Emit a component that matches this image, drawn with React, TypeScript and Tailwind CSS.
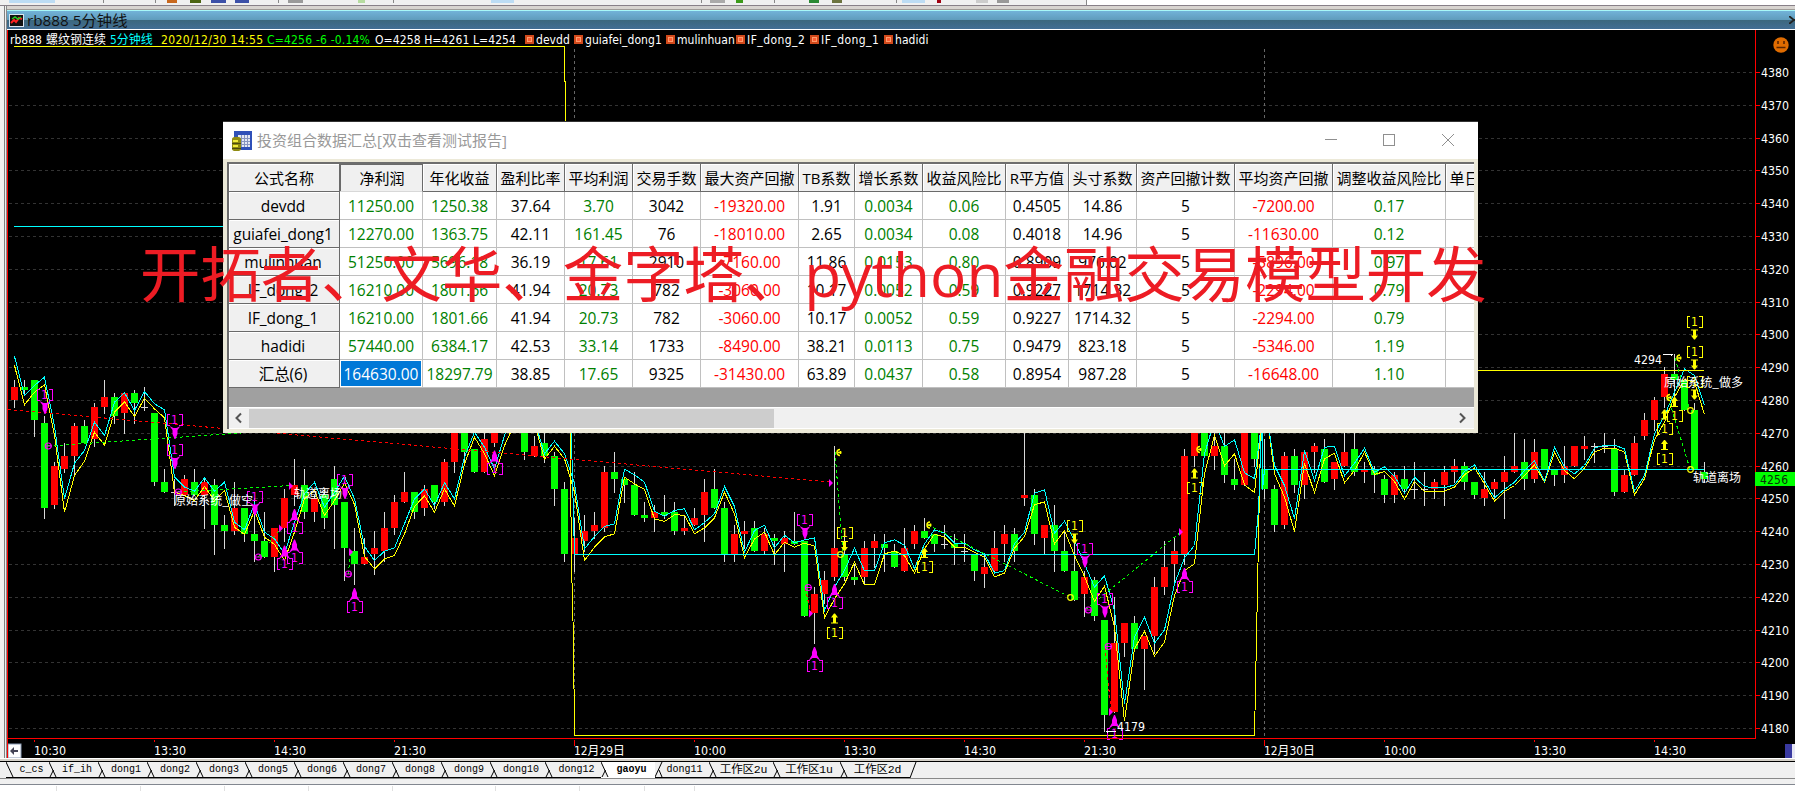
import React from "react";

type Bar = [kind: "r" | "g", top: number, bottom: number, high: number, low: number];

const barRows = `r84,80,86,78 g84,83,86,82 g86,74,86,69 g73,47,75,44 r60,48,61,47 r63,59,67,58 r72,63,73,57 g72,67,74,67 r78,68,79,66 r81,78,86,76
g81,75,82,73 r82,76,82,70 g82,79,83,73 r78,78,84,77 g76,55,76,54 g55,52,59,52 r52,52,56,48 r56,51,57,51 g55,51,59,51 r55,51,56,41
g54,42,56,33 g42,40,45,35 r47,40,55,39 g47,39,47,37 g39,37,50,31 g37,32,46,32 r41,32,41,28 r50,41,53,37 r54,51,62,48 g54,46,59,44
r50,46,51,43 g51,44,53,41 g56,48,60,35 g49,35,49,25 g34,30,41,24 r32,30,38,30 r35,33,40,27 r41,34,46,31 r49,41,51,39 r52,49,58,49
g52,46,52,44 r53,47,54,45 g54,49,54,47 r61,49,62,48 r75,61,78,58 g75,64,78,61 g65,58,65,58 r68,58,72,58 r75,67,78,66 r82,75,84,74
g84,78,85,76 g78,64,79,62 r66,63,69,63 g67,63,72,61 g63,53,64,48 g53,33,55,31 r38,33,44,28 r40,37,45,34 r42,40,46,38 r58,41,60,40
g58,56,64,52 g56,54,56,49 g54,45,58,45 g45,44,49,43 r46,44,48,40 g46,45,51,44 g46,40,49,39 r41,40,45,39 r44,42,47,42 r52,45,56,37
g53,47,59,47 g47,33,49,31 r39,33,42,31 r40,39,43,35 g41,34,43,34 r39,34,41,33 g38,37,39,30 r38,36,40,28 g37,36,46,36 g37,14,37,14
r21,15,23,6 r25,21,28,18 r35,26,66,25 g33,26,40,25 g26,25,30,24 r35,26,37,24 r37,35,39,29 g36,35,39,28 g34,29,36,29 r35,28,41,28
r40,36,42,35 g40,38,44,38 g39,36,39,34 r36,36,42,35 g36,35,39,30 r34,34,39,31 g33,28,33,25 r29,27,33,23 r35,28,40,28 r39,36,42,31
g39,34,41,31 r51,50,75,48 g51,39,53,36 r42,38,42,33 g42,34,48,28 g34,28,40,28 g28,19,37,19 r26,21,28,14 g25,14,26,13 g13,-16,13,-21
r6,-15,20,-15 r12,6,12,2 g12,4,14,4 r8,4,8,-8 r23,8,26,3 r29,23,37,21 r34,30,38,24 r63,33,65,30 r75,63,78,60 g75,63,78,63
r66,63,70,59 g66,57,75,55 g56,54,62,53 r75,54,75,54 g75,62,75,60 g59,53,68,50 g53,42,54,40 r63,42,64,41 g63,54,65,52 r64,54,64,50
r66,64,67,58 g65,55,68,55 r61,56,61,53 r64,60,75,60 g65,58,75,57 r59,58,61,55 g59,57,60,52 g56,51,57,49 r57,51,58,49 g56,53,60,52
r53,53,61,50 r53,53,58,48 r55,53,56,50 r58,54,60,48 r60,58,62,55 g60,55,61,53 g55,51,55,50 r53,50,58,48 r55,53,56,50 r58,55,63,44
r60,58,70,58 g61,56,68,53 r64,56,68,55 g65,59,65,59 g59,57,59,54 r60,57,66,55 r66,60,66,60 r66,65,69,62 r66,66,67,61 r66,66,70,64
g65,52,68,51 r57,52,59,52 r67,57,69,57 r74,69,76,68 r80,74,81,71 r88,81,90,78 g88,86,94,81 g86,77,86,77 g77,59,79,59 g58,56,61,55`;

const bars: Bar[] = barRows.split(/\s+/).map((t) => {
  const n = t.slice(1).split(",").map(Number);
  return [t[0] as "r" | "g", n[0], n[1], n[2], n[3]];
});

// Moving lines, one value per bar, in thirds of a pixel below y = 420.
const fast = [
  -192, -75, -105, -130, 18, 235, 128, 90, 5, 45, -55, -83, -30, -87, -50, -32, 170, 200, 212, 172, 212, 185, 305, 328, 250, 335, 355, 400, 305, 220,
  185, 260, 215, 167, 235, 378, 420, 392, 382, 310, 235, 205, 255, 187, 235, 110, 35, 80, 145, 45, -40, -60, 0, 100, 62, 100, 190, 385, 348, 318,
  310, 146, 163, 185, 272, 287, 270, 265, 328, 306, 280, 198, 258, 395, 330, 314, 382, 344, 367, 358, 352, 570, 500, 450, 383, 451, 451, 367, 358, 374,
  445, 370, 328, 338, 368, 368, 388, 400, 458, 450, 370, 335, 218, 208, 338, 302, 360, 430, 500, 466, 570, 850, 650, 590, 668, 628, 490, 412, 375, 100,
  0, 78, 58, 157, 174, -60, 135, 195, 295, 90, 180, 80, 78, 166, 128, 83, 155, 139, 167, 218, 170, 198, 202, 202, 193, 153, 133, 180, 232, 207,
  185, 150, 121, 182, 80, 140, 160, 135, 83, 74, 74, 85, 212, 165, 40, -15, -85, -155, -135, -45,
];
const slow = [
  -165, -47, -85, -107, 45, 275, 165, 122, 35, 74, -25, -56, -12, -67, -35, -8, 215, 225, 240, 198, 240, 210, 320, 342, 270, 350, 372, 420, 335, 235,
  210, 285, 240, 188, 252, 408, 445, 415, 405, 340, 258, 226, 275, 205, 257, 130, 50, 100, 165, 75, 10, -20, 10, 116, 77, 115, 215, 420, 380, 349,
  340, 170, 190, 207, 295, 303, 283, 284, 340, 322, 292, 215, 280, 412, 355, 335, 403, 365, 380, 368, 377, 592, 535, 490, 425, 493, 493, 400, 392, 405,
  458, 385, 341, 350, 380, 380, 395, 410, 469, 458, 383, 348, 253, 244, 370, 330, 405, 468, 543, 497, 620, 902, 685, 632, 706, 665, 525, 450, 430, 160,
  45, 136, 100, 193, 216, -70, 160, 230, 333, 128, 217, 115, 98, 187, 150, 95, 162, 153, 183, 236, 183, 213, 212, 212, 200, 163, 142, 190, 242, 213,
  195, 165, 133, 185, 96, 150, 175, 143, 95, 83, 83, 95, 223, 175, 58, 5, -70, -123, -115, -18,
];

const line = (v: number[]) => v.map((w, i) => `${14.5 + 10 * i},${420.5 + w / 3}`).join(" ");
const priceY = (p: number) => Math.round(72 + (4380 - p) * 3.28);

const M = "#ff00ff";
const Y = "#ffff00";

type Pt = [number, number];
const sellMarks: Pt[] = [[44, 395], [174, 420], [174, 450], [254, 496.5], [344, 480], [804, 520], [1084, 548.5], [1104, 598.5]];
const coverMarks: Pt[] = [[294, 527.5], [294, 558], [284, 564], [354, 606.5], [494, 469], [814, 665.5], [834, 602.5], [1184, 586.5], [1114, 733.5]];
const exitMarks: Pt[] = [[844, 533], [1074, 525.5], [1694, 321.5], [1694, 351.5], [1694, 381.5]];
const buyMarks: Pt[] = [[834, 632.5], [924, 567], [1194, 487.5], [1664, 428.5], [1674, 416], [1664, 459]];
const magentaRings: Pt[] = [[48, 446], [178, 492], [258, 557], [348, 574], [808, 587.5], [1088, 610], [1108, 646.5]];
const yellowRings: Pt[] = [[840, 554], [1070, 597], [1690, 410], [1690, 469]];
const yellowOpens: Pt[] = [[838, 452], [928, 524.5], [1198, 449], [1678, 357.5], [1668, 397]];
const triangles: Pt[] = [[291, 485.5], [281, 528], [351, 551.5], [831, 482.5], [811, 613], [1181, 531.5], [1111, 711.5]];
const trades: [number, number, number, number, string][] = [
  [8, 409.5, 830, 482, "#ff0000"],
  [48, 446, 330, 427, "#00ff00"],
  [178, 492, 291, 485.5, "#00ff00"],
  [258, 557, 281, 528, "#00ff00"],
  [348, 574, 351, 552, "#00ff00"],
  [805, 588, 811, 613, "#ff0000"],
  [835, 452, 843, 554, "#00ff00"],
  [928, 525, 1068, 596, "#00ff00"],
  [1085, 610, 1181, 532, "#00ff00"],
  [1105, 647, 1111, 712, "#ff0000"],
  [1675, 358, 1690, 410, "#00ff00"],
  [1668, 397, 1690, 469, "#00ff00"],
];
const times: [number, string, number?][] = [
  [34, "10:30"], [154, "13:30"], [274, "14:30"], [394, "21:30"], [574, "12月29日", 1], [694, "10:00"], [844, "13:30"],
  [964, "14:30"], [1084, "21:30"], [1264, "12月30日", 1], [1384, "10:00"], [1534, "13:30"], [1654, "14:30"],
];
const prices = Array.from({ length: 21 }, (_, i) => 4380 - i * 10);
const chartFont = "'DejaVu Sans Condensed','DejaVu Sans','Noto Sans CJK SC',sans-serif";
const signalFont = "'Noto Sans CJK SC',sans-serif";

function One({ x, y, color }: { x: number; y: number; color: string }) {
  return (
    <g fill="none" stroke={color} strokeWidth="1" shapeRendering="crispEdges">
      <path d={`M${x - 4} ${y - 5.5}h-3v11h3M${x + 5} ${y - 5.5}h3v11h-3`} />
      <text x={x + 0.5} y={y + 4} fill={color} stroke="none" fontSize="12" textAnchor="middle">1</text>
    </g>
  );
}

function Label({ x, y, w, font, children }: { x: number; y: number; w: number; font?: string; children: string }) {
  return (
    <text x={x} y={y + 4.5} fill="#fff" fontSize="12" fontFamily={font} textLength={w} lengthAdjust="spacingAndGlyphs">{children}</text>
  );
}

function Chart() {
  return (
    <svg className="block h-[712px] w-[1787px] shrink-0" viewBox="8 46 1787 712" fontFamily={chartFont}>
      <g stroke="#333" strokeDasharray="3 3" shapeRendering="crispEdges">
        {prices.map((p) => <line key={p} x1="9" x2="1754" y1={priceY(p) + 0.5} y2={priceY(p) + 0.5} />)}
        <path d="M574.5 49V736M1264.5 49V736" stroke="#666" fill="none" />
      </g>
      <g shapeRendering="crispEdges">
        {bars.map(([k, t, b, h, l], i) => {
          const x = 11 + 10 * i;
          const yt = priceY(4200 + t);
          const yb = priceY(4200 + b);
          const yh = priceY(4200 + h);
          return (
            <g key={i}>
              <rect x={x + 3} y={yh} width="1" height={priceY(4200 + l) - yh + 1} fill="#d8d8d8" />
              <rect x={x} y={yt} width="7" height={Math.max(1, yb - yt)} fill={t === b ? "#d8d8d8" : k === "r" ? "#ff0000" : "#00ff00"} />
            </g>
          );
        })}
      </g>
      <g fill="none" shapeRendering="crispEdges">
        <polyline points={line(slow)} stroke={Y} />
        <polyline points={line(fast)} stroke="#00ffff" />
        <path d="M14 46.5H564.5V81L565.5 82V240L570.5 433V470L571.5 563L573.5 640L574.5 735.5H1254.5L1260.5 440L1262.5 370.5H1704" stroke={Y} />
        <path d="M14 226.5H566L571.5 440L574.5 554.5H1254.5L1258.5 510L1262.5 400V490L1264.5 469.5H1704" stroke="#00ffff" />
        {trades.map(([a, b, c, d, s], i) => <line key={i} x1={a} y1={b} x2={c} y2={d} stroke={s} strokeDasharray="3 3" />)}
      </g>
      {sellMarks.map(([x, y], i) => (
        <g key={i}>
          <One x={x} y={y} color={M} />
          <path d={`M${x - 4.5} ${y + 6}l3 4v4l2 5h1l2-5v-4l3-4l-4 2h-3z`} fill={M} />
        </g>
      ))}
      {coverMarks.map(([x, y], i) => (
        <g key={i}>
          <One x={x} y={y} color={M} />
          <path d={`M${x} ${y - 18.5}h1l2 5v3l3.5 6l-4-3h-4l-4 3l3.5-6v-3z`} fill={M} />
        </g>
      ))}
      {exitMarks.map(([x, y], i) => (
        <g key={i}>
          <One x={x} y={y} color={Y} />
          <path d={`M${x - 3} ${y + 8}h7v1h-2v5h2l-3 4h-1l-3-4h2v-5h-2z`} fill={Y} />
        </g>
      ))}
      {buyMarks.map(([x, y], i) => (
        <g key={i}>
          <One x={x} y={y} color={Y} />
          <path d={`M${x - 3} ${y - 9}h7v-1h-2v-5h2l-3-4h-1l-3 4h2v5h-2z`} fill={Y} />
        </g>
      ))}
      <g fill="none" strokeWidth="1.2">
        {magentaRings.map(([x, y], i) => <path key={i} d={`M${x - 2.7} ${y}a3 3 0 1 1 6 0a3 3 0 1 1 -6 0M${x - 3} ${y}h7`} stroke={M} />)}
        {yellowRings.map(([x, y], i) => <circle key={i} cx={x + 0.5} cy={y + 0.5} r="2.8" stroke={Y} />)}
        {yellowOpens.map(([x, y], i) => <path key={i} d={`M${x + 2} ${y - 2.5}a3 3 0 1 0 0 6M${x} ${y + 0.5}h3.5M${x + 2.5} ${y - 1}v3`} stroke={Y} strokeWidth="1.5" />)}
      </g>
      {triangles.map(([x, y], i) => <path key={i} d={`M${x - 2} ${y - 3.5}v8l4-4z`} fill={M} />)}
      <Label x={174} y={500.5} w={79} font={signalFont}>原始系统_做空</Label>
      <Label x={294} y={493} w={48} font={signalFont}>轨道离场</Label>
      <Label x={1664} y={382} w={79} font={signalFont}>原始系统_做多</Label>
      <Label x={1693} y={477} w={48} font={signalFont}>轨道离场</Label>
      <Label x={1634} y={359.5} w={28}>4294</Label>
      <Label x={1117} y={726.5} w={28}>4179</Label>
      <path d="M1663 354.5h10m-2-1v2M1106 731.5h10m-9-1v2" stroke="#fff" shapeRendering="crispEdges" />
      <g stroke="#ff0000" fill="none" shapeRendering="crispEdges">
        <path d="M8 738.5H1755.5V46" />
        {prices.map((p) => <path key={p} d={`M1756 ${priceY(p) + 0.5}h4`} />)}
        {times.map(([x, , long]) => <path key={x} d={`M${x + 0.5} 740v${long ? 6 : 2}`} />)}
      </g>
      {prices.map((p) => <Label key={p} x={1761} y={priceY(p) + 0.5} w={28}>{String(p)}</Label>)}
      <rect x="1755" y="472" width="40" height="14" fill="#00ff00" />
      <text x="1760" y="483.5" fontSize="12" fill="#083008" textLength="28">4256</text>
      {times.map(([x, t, long]) => <Label key={x} x={x} y={750.5} w={long ? 51 : 32}>{t}</Label>)}
      <rect x="8" y="744" width="13" height="14" fill="#fff" stroke="#8a9bb5" />
      <path d="M10 751l4-4v3h4v2h-4v3z" fill="#445" />
      <rect x="1785" y="744" width="7" height="14" fill="#3a3aa0" />
      <rect x="1792" y="744" width="3" height="14" fill="#e6e6f4" />
    </svg>
  );
}

const legend: [string, string][] = [
  ["devdd", "w-[49px]"], ["guiafei_dong1", "w-[92px]"], ["mulinhuan", "w-[70px]"],
  ["IF_dong_2", "w-[74px]"], ["IF_dong_1", "w-[74px]"], ["hadidi", "w-[60px]"],
];

function QuoteLine() {
  return (
    <div className="flex h-4 shrink-0 whitespace-nowrap bg-black font-['DejaVu_Sans_Condensed','DejaVu_Sans','Noto_Sans_CJK_SC',sans-serif] text-[12px] leading-[20px] text-white">
      <div className="flex w-[1748px] shrink-0 border-r border-[#ff0000] pl-[2px]">
        <span className="w-[36px]">rb888</span>
        <span className="w-[64px]">螺纹钢连续</span>
        <span className="w-[51px] text-[#00ffff]">5分钟线</span>
        <span className="w-[106px] tracking-[0.35px] text-[#ffff00]">2020/12/30 14:55</span>
        <span className="w-[108px] tracking-[0.2px] text-[#00ff00]">C=4256 -6 -0.14%</span>
        <span className="w-[150px] tracking-[0.1px]">O=4258 H=4261 L=4254</span>
        {legend.map(([n, w]) => (
          <span key={n} className={`flex ${n.startsWith("IF") ? "tracking-[0.45px]" : "tracking-[0.05px]"} ${w}`}>
            <i className="mr-[2px] mt-[5px] block h-[9px] w-[9px] border-2 border-[#d24a1c] bg-[#ff5c33] shadow-[inset_0_0_0_1px_#ff9a6a]" />
            {n}
          </span>
        ))}
      </div>
    </div>
  );
}

const columns: [string, string][] = [
  ["公式名称", "w-[111px]"], ["净利润", "w-[83px]"], ["年化收益", "w-[74px]"], ["盈利比率", "w-[68px]"], ["平均利润", "w-[68px]"],
  ["交易手数", "w-[68px]"], ["最大资产回撤", "w-[98px]"], ["TB系数", "w-[56px]"], ["增长系数", "w-[68px]"], ["收益风险比", "w-[83px]"],
  ["R平方值", "w-[63px]"], ["头寸系数", "w-[68px]"], ["资产回撤计数", "w-[98px]"], ["平均资产回撤", "w-[98px]"], ["调整收益风险比", "w-[113px]"], ["单日", "w-[38px]"],
];
const rows = [
  ["devdd", "11250.00", "1250.38", "37.64", "3.70", "3042", "-19320.00", "1.91", "0.0034", "0.06", "0.4505", "14.86", "5", "-7200.00", "0.17", ""],
  ["guiafei_dong1", "12270.00", "1363.75", "42.11", "161.45", "76", "-18010.00", "2.65", "0.0034", "0.08", "0.4018", "14.96", "5", "-11630.00", "0.12", ""],
  ["mulinhuan", "51250.00", "5696.18", "36.19", "17.61", "2910", "-7160.00", "11.86", "0.0153", "0.80", "0.8909", "976.02", "5", "-5896.00", "0.97", ""],
  ["IF_dong_2", "16210.00", "1801.66", "41.94", "20.73", "782", "-3060.00", "10.17", "0.0052", "0.59", "0.9227", "1714.32", "5", "-2294.00", "0.79", ""],
  ["IF_dong_1", "16210.00", "1801.66", "41.94", "20.73", "782", "-3060.00", "10.17", "0.0052", "0.59", "0.9227", "1714.32", "5", "-2294.00", "0.79", ""],
  ["hadidi", "57440.00", "6384.17", "42.53", "33.14", "1733", "-8490.00", "38.21", "0.0113", "0.75", "0.9479", "823.18", "5", "-5346.00", "1.19", ""],
  ["汇总(6)", "164630.00", "18297.79", "38.85", "17.65", "9325", "-31430.00", "63.89", "0.0437", "0.58", "0.8954", "987.28", "5", "-16648.00", "1.10", ""],
];
const green = [1, 2, 4, 8, 9, 14];
const red = [6, 13];

function cellClass(r: number, c: number) {
  if (c === 0) return "bg-[#f0f0f0] border-r border-b border-[#6a6a6a] shadow-[inset_1px_1px_0_#fff] pr-[2px] tracking-[-0.1px] text-black";
  if (r === 6 && c === 1) return "bg-[#0078d7] border-r border-b border-[#c0c0c0] shadow-[inset_0_0_0_1px_#fff] text-white";
  if (green.includes(c)) return "bg-white border-r border-b border-[#c0c0c0] text-[#008000]";
  if (red.includes(c)) return "bg-white border-r border-b border-[#c0c0c0] text-[#ff0000]";
  return "bg-white border-r border-b border-[#c0c0c0] text-black";
}

function SummaryDialog() {
  return (
    <div className="absolute left-[223px] top-[121px] flex h-[312px] w-[1255px] flex-col border-t border-[#333] bg-[#ece9d8] font-['Open_Sans','Noto_Sans_CJK_SC',sans-serif]">
      <div className="flex h-[37px] shrink-0 items-center bg-white pl-[9px]">
        <svg className="h-5 w-5" viewBox="0 0 20 20">
          <rect x="2" y="0" width="18" height="19" fill="#2f50b8" />
          <rect x="6" y="4" width="12" height="12" fill="#e4e8f4" />
          <path d="M6 7.5h12M6 10.5h12M6 13.5h12M9.500 4v12M12.500 4v12M15.500 4v12" stroke="#8794bf" />
          <path d="M0 8c0-3 9-3 9 0v10c0 3-9 3-9 0z" fill="#8f8b12" />
          <path d="M1 9h5v2H1zM1 14h5v2H1z" fill="#f1ec3c" />
          <path d="M0 12.500h9M0 17.500h9" stroke="#4d4a10" />
        </svg>
        <span className="ml-[5px] w-[890px] text-[15px] text-[#999]">投资组合数据汇总[双击查看测试报告]</span>
        <svg className="ml-auto mr-[22px] h-4 w-[132px]" viewBox="0 0 132 16" fill="none" stroke="#8f8f8f" shapeRendering="crispEdges">
          <path d="M1 6.500h12M59.500 1.500h11v11h-11z" />
          <path d="M118 1l12 12M130 1l-12 12" shapeRendering="auto" />
        </svg>
      </div>
      <div className="mx-1 mt-[3px] flex h-[267px] w-[1247px] flex-col overflow-hidden border-l-2 border-t-2 border-[#6d6d6d] bg-[#a0a0a0]">
        <div className="flex h-7 shrink-0">
          {columns.map(([n, w], c) => (
            <div key={n} className={`flex shrink-0 items-center justify-center whitespace-nowrap border-b border-r border-[#6a6a6a] bg-[#f0f0f0] pt-px text-[15px] text-black ${c === 1 ? "border-b-[#d8d8d8] pl-[2px] shadow-[inset_1px_1px_0_#6a6a6a]" : "shadow-[inset_1px_1px_0_#fff]"} ${c === 0 ? "pr-0" : ""} ${w}`}>{n}</div>
          ))}
        </div>
        {rows.map((row, r) => (
          <div key={r} className="flex h-7 shrink-0">
            {row.map((v, c) => (
              <div key={c} className={`flex shrink-0 items-center justify-center whitespace-nowrap pt-[2px] text-[15.500px] ${columns[c][1]} ${cellClass(r, c)}`}>{v}</div>
            ))}
          </div>
        ))}
        <div className="mt-[19px] flex h-[21px] shrink-0 items-center border-t border-white bg-[#f0f0f0]">
          <svg className="h-3 w-5" viewBox="0 0 20 12" fill="none" stroke="#555" strokeWidth="2"><path d="M12 1.500L7.500 6l4.500 4.500" /></svg>
          <div className="h-[19px] w-[525px] bg-[#cdcdcd]" />
          <svg className="ml-auto mr-[2px] h-3 w-5" viewBox="0 0 20 12" fill="none" stroke="#555" strokeWidth="2"><path d="M8 1.500L12.500 6L8 10.500" /></svg>
        </div>
        <div className="h-[2px] shrink-0 bg-white" />
      </div>
    </div>
  );
}

const tabs: [string, string][] = [
  ["c_cs", "w-[43px]"], ["if_ih", "w-[49px]"], ["dong1", "w-[49px]"], ["dong2", "w-[49px]"], ["dong3", "w-[49px]"], ["dong5", "w-[49px]"],
  ["dong6", "w-[49px]"], ["dong7", "w-[49px]"], ["dong8", "w-[49px]"], ["dong9", "w-[49px]"], ["dong10", "w-[55px]"], ["dong12", "w-[56px]"],
  ["gaoyu", "w-[54px]"], ["dong11", "w-[54px]"], ["工作区2u", "w-[64px]"], ["工作区1u", "w-[67px]"], ["工作区2d", "w-[70px]"],
];

function TabStrip() {
  return (
    <div className="flex h-[17px] shrink-0 border-t border-black bg-[#f0f0f0] pl-[6px] font-['Liberation_Mono','Noto_Sans_CJK_SC',monospace] text-[10px] leading-4 text-black">
      {tabs.map(([n, w], i) => (
        <div key={n} className={`flex h-4 shrink-0 border-b border-black ${n === "gaoyu" ? "border-b-white bg-white" : ""} ${w}`}>
          <svg className="h-[15px] w-2 shrink-0" viewBox="0 0 8 15" fill="none" stroke="#000">
            {n === "gaoyu" && <path d="M0 0L7 15H0z" fill="#f0f0f0" stroke="none" />}
            {n === "dong11" ? <path d="M7 0L0 15M4 8l3 7" /> : <path d={i ? "M0 0L7 15M4.500 8L1 15" : "M0 0L7 15"} />}
          </svg>
          <span className={`flex-1 whitespace-nowrap text-center ${n === "gaoyu" ? "font-bold" : ""} ${i > 12 ? "mr-[3px]" : i > 0 ? "mr-px" : ""} ${i > 13 ? "text-[11.500px] tracking-[-0.2px]" : ""}`}>{n}</span>
        </div>
      ))}
      <svg className="h-4 w-2 shrink-0" viewBox="0 0 8 16" fill="none" stroke="#000"><path d="M6 0L0 16" /></svg>
    </div>
  );
}

const toolBits: [string, string][] = [
  ["w-[46px] bg-[#bcdcf4]", "ml-[9px]"], ["w-px bg-[#888]", "ml-[48px]"], ["w-px bg-[#888]", "ml-[51px]"], ["w-[10px] bg-[#c8681e]", "ml-[11px]"],
  ["w-[11px] bg-[#4b6412]", "ml-[13px]"], ["w-[15px] bg-[#3c50a8]", "ml-[10px]"], ["w-[14px] bg-[#3c50a8]", "ml-[9px]"], ["w-px bg-[#888]", "ml-[29px]"],
  ["w-[15px] bg-[#9a9a9a]", "ml-[9px]"], ["w-[7px] bg-[#b6dca0]", "ml-[55px]"], ["w-px bg-[#888]", "ml-[28px]"], ["w-[23px] bg-[#bcdcf4]", "ml-[97px]"],
  ["w-px bg-[#888]", "ml-[187px]"], ["w-[15px] bg-[#aaa]", "ml-[8px]"], ["w-[7px] bg-[#3c9a1a]", "ml-[11px]"], ["w-px bg-[#888]", "ml-[31px]"],
  ["w-[10px] bg-[#2a8a34]", "ml-[34px]"], ["w-[10px] bg-[#6d7440]", "ml-[13px]"], ["w-px bg-[#888]", "ml-[54px]"], ["w-[23px] bg-[#bcdcf4]", "ml-[5px]"],
  ["w-[4px] bg-[#a00010]", "ml-[12px]"], ["w-[12px] bg-[#ccc]", "ml-[35px]"], ["w-[12px] bg-[#999]", "ml-[9px]"],
];
const statusGaps = ["w-[57px]", "w-[84px]", "w-[84px]", "w-[84px]", "w-[84px]", "w-[103px]", "w-[84px]", "w-[65px]", "w-[50px]"];

export default function App() {
  return (
    <div className="relative flex h-[791px] w-[1795px] flex-col overflow-hidden bg-[#f0f0f0]">
      <div className="flex h-[5px] shrink-0 bg-white">
        <div className="flex w-[1087px] items-start border-r border-[#888] bg-[#f0f0f0]">
          {toolBits.map(([b, m], i) => <i key={i} className={`block h-[3px] shrink-0 ${b} ${m}`} />)}
        </div>
      </div>
      <div className="h-px shrink-0 bg-[#888088]" />
      <div className="flex h-[752px] shrink-0">
        <div className="w-[7px] shrink-0 border-r border-[#8a8a8a] bg-[#f0f0f0] pl-1">
          <div className="h-full w-px bg-[#808080]" />
        </div>
        <div className="flex w-[1788px] flex-col">
          <div className="h-[4px] shrink-0 border-b border-[#a09c98] bg-[#d8d4d0]" />
          <div className="flex h-5 shrink-0 items-center border-b border-t border-b-white border-t-[#a8f8f8] bg-[linear-gradient(#72b2d8_0%,#5f9cbc_50%,#3c687e_51%,#426e94_100%)] pl-[2px]">
            <svg className="h-[13px] w-[15px]" viewBox="0 0 15 13">
              <rect x=".5" y=".5" width="14" height="12" fill="#111" stroke="#d8e4f0" />
              <path d="M2 9l3-3 2 2 3-4 3 1" stroke="#f22" strokeWidth="2" fill="none" />
              <path d="M3 5l3-2 3 2 3-2" stroke="#2c2" strokeWidth="1.500" fill="none" />
            </svg>
            <span className="ml-[3px] font-['Open_Sans','Noto_Sans_CJK_SC',sans-serif] text-[15.300px] leading-[18px] text-[#111]">rb888 5分钟线</span>
            <svg className="ml-auto h-2 w-[6px]" viewBox="0 0 6 8"><path d="M0 0l5 4-5 4M6 4H4" stroke="#222" strokeWidth="1.800" fill="none" /></svg>
          </div>
          <div className="flex h-[728px] shrink-0 flex-col border-l border-[#ff0000] bg-black">
            <QuoteLine />
            <Chart />
          </div>
        </div>
      </div>
      <div className="h-[3px] shrink-0 border-t border-white bg-[#d4d0c8]" />
      <TabStrip />
      <div className="h-px shrink-0 bg-[#888]" />
      <div className="h-[5px] shrink-0 bg-[#f0f0f0]" />
      <div className="h-px shrink-0 bg-[#828790]" />
      <div className="flex h-[6px] shrink-0 bg-white pt-px">
        {statusGaps.map((w, i) => <i key={i} className={`block h-[5px] border-r border-[#e0e0e0] ${w}`} />)}
      </div>
      <svg className="absolute left-[1773px] top-[37px] h-4 w-4" viewBox="0 0 16 16">
        <circle cx="8" cy="8" r="7.700" fill="#e06c00" />
        <path d="M5 4v3M11 4v3M3.500 10.500h9" stroke="#5a2500" strokeWidth="1.600" />
      </svg>
      <SummaryDialog />
      <div className="absolute left-[140px] top-[232px] whitespace-nowrap font-['Open_Sans','Noto_Sans_CJK_SC',sans-serif] text-[60.400px] leading-[84px] text-[#ed1c24]">
        开拓者、文华、金字塔、python金融交易模型开发
      </div>
    </div>
  );
}
